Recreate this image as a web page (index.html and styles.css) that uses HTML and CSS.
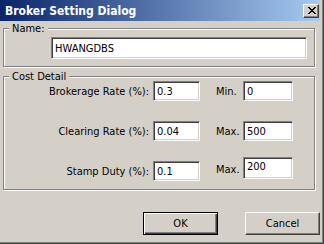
FILE: index.html
```html
<!DOCTYPE html>
<html lang="en">
<head>
    <meta charset="UTF-8">
    <title>Broker Setting Dialog</title>
    <link rel="stylesheet" href="styles.css">
</head>
<body>
    <div class="window">
        <div class="titlebar">
            <span class="title">Broker Setting Dialog</span>
            <span class="close">
                <svg width="8" height="7" viewBox="0 0 8 7" shape-rendering="crispEdges">
                    <path fill="#000" d="M0 0h2v1h-2zM6 0h2v1h-2zM1 1h2v1h-2zM5 1h2v1h-2zM2 2h4v1h-4zM3 3h2v1h-2zM2 4h4v1h-4zM1 5h2v1h-2zM5 5h2v1h-2zM0 6h2v1h-2zM6 6h2v1h-2z"/>
                </svg>
            </span>
        </div>
        <div class="client">
            <fieldset class="group group-name">
                <legend>Name:</legend>
                <input class="field field-name" type="text" value="HWANGDBS">
            </fieldset>

            <fieldset class="group group-cost">
                <legend>Cost Detail</legend>
                <div class="cost-grid">
                    <label class="lbl">Brokerage Rate (%):</label>
                    <input class="field" type="text" value="0.3">
                    <label class="lbl-small">Min.</label>
                    <input class="field field-wide" type="text" value="0">

                    <label class="lbl">Clearing Rate (%):</label>
                    <input class="field" type="text" value="0.04">
                    <label class="lbl-small">Max.</label>
                    <input class="field field-wide" type="text" value="500">

                    <label class="lbl">Stamp Duty (%):</label>
                    <input class="field" type="text" value="0.1">
                    <label class="lbl-small lbl-raised">Max.</label>
                    <input class="field field-wide field-raised" type="text" value="200">
                </div>
            </fieldset>

            <div class="buttons">
                <button class="btn btn-default">OK</button>
                <button class="btn">Cancel</button>
            </div>
        </div>
    </div>
</body>
</html>
```

FILE: styles.css
```css
* {
    box-sizing: border-box;
}
body {
    margin: 0;
    background: #d4d0c8;
    color: #000;
    font-family: "DejaVu Sans Condensed", "DejaVu Sans", sans-serif;
    font-stretch: condensed;
    font-size: 11px;
}
.window {
    width: 324px;
    height: 244px;
    padding: 0 4px 4px 0;
    display: flex;
    flex-direction: column;
    box-shadow: inset -1px -1px #404040, inset -2px -2px #808080;
}
.titlebar {
    height: 21px;
    display: flex;
    align-items: center;
    justify-content: space-between;
    padding: 0 1px 0 5px;
    background: linear-gradient(to right, #0a246a, #a6caf0);
}
.title {
    color: #fff;
    font-weight: bold;
    font-size: 12px;
}
.close {
    width: 16px;
    height: 14px;
    display: flex;
    align-items: center;
    justify-content: center;
    padding-left: 1px;
    background: #d4d0c8;
    border: 1px solid;
    border-color: #fff #404040 #404040 #fff;
    box-shadow: inset -1px -1px #808080;
}
.client {
    flex: 1;
    display: flex;
    flex-direction: column;
    padding: 3px 0 0 3px;
}
.group {
    width: 312px;
    margin: 0;
    padding: 0;
    min-inline-size: 0;
    border: 1px solid #808080;
    box-shadow: inset 1px 1px #fff, 1px 1px #fff;
}
.group legend {
    margin-left: 5px;
    padding: 0 3px;
    line-height: 9px;
    background: #d4d0c8;
}
.group-name {
    padding: 4px 0 7px;
}
.group-cost {
    margin-top: 5px;
    padding-bottom: 8px;
}
.field {
    width: 47px;
    height: 20px;
    padding: 0 0 0 3px;
    font: inherit;
    color: #000;
    background: #fff;
    border: 1px solid;
    border-color: #808080 #fff #fff #808080;
    box-shadow: inset 1px 1px #404040, inset -1px -1px #d4d0c8;
    outline: none;
}
.field-name {
    display: block;
    width: 256px;
    height: 22px;
    margin-left: 47px;
}
.field-wide {
    width: 50px;
}
.field-raised {
    height: 22px;
    margin-top: -6px;
    padding-bottom: 3px;
}
.cost-grid {
    display: grid;
    grid-template-columns: 149px 47px 43px 50px;
    grid-template-rows: 20px 20px 20px;
    row-gap: 20px;
    align-items: center;
}
.lbl {
    text-align: right;
    padding-right: 4px;
}
.lbl-small {
    padding-left: 16px;
}
.lbl-raised {
    margin-top: -3px;
}
.buttons {
    display: flex;
    justify-content: flex-end;
    gap: 27px;
    margin-top: 22px;
}
.btn {
    width: 75px;
    height: 23px;
    padding: 0;
    font: inherit;
    color: #000;
    background: #d4d0c8;
    border: 1px solid;
    border-color: #fff #404040 #404040 #fff;
    box-shadow: inset -1px -1px #808080;
}
.btn-default {
    border-color: #000;
    box-shadow: inset 1px 1px #fff, inset -1px -1px #404040, inset -2px -2px #808080;
}
```
